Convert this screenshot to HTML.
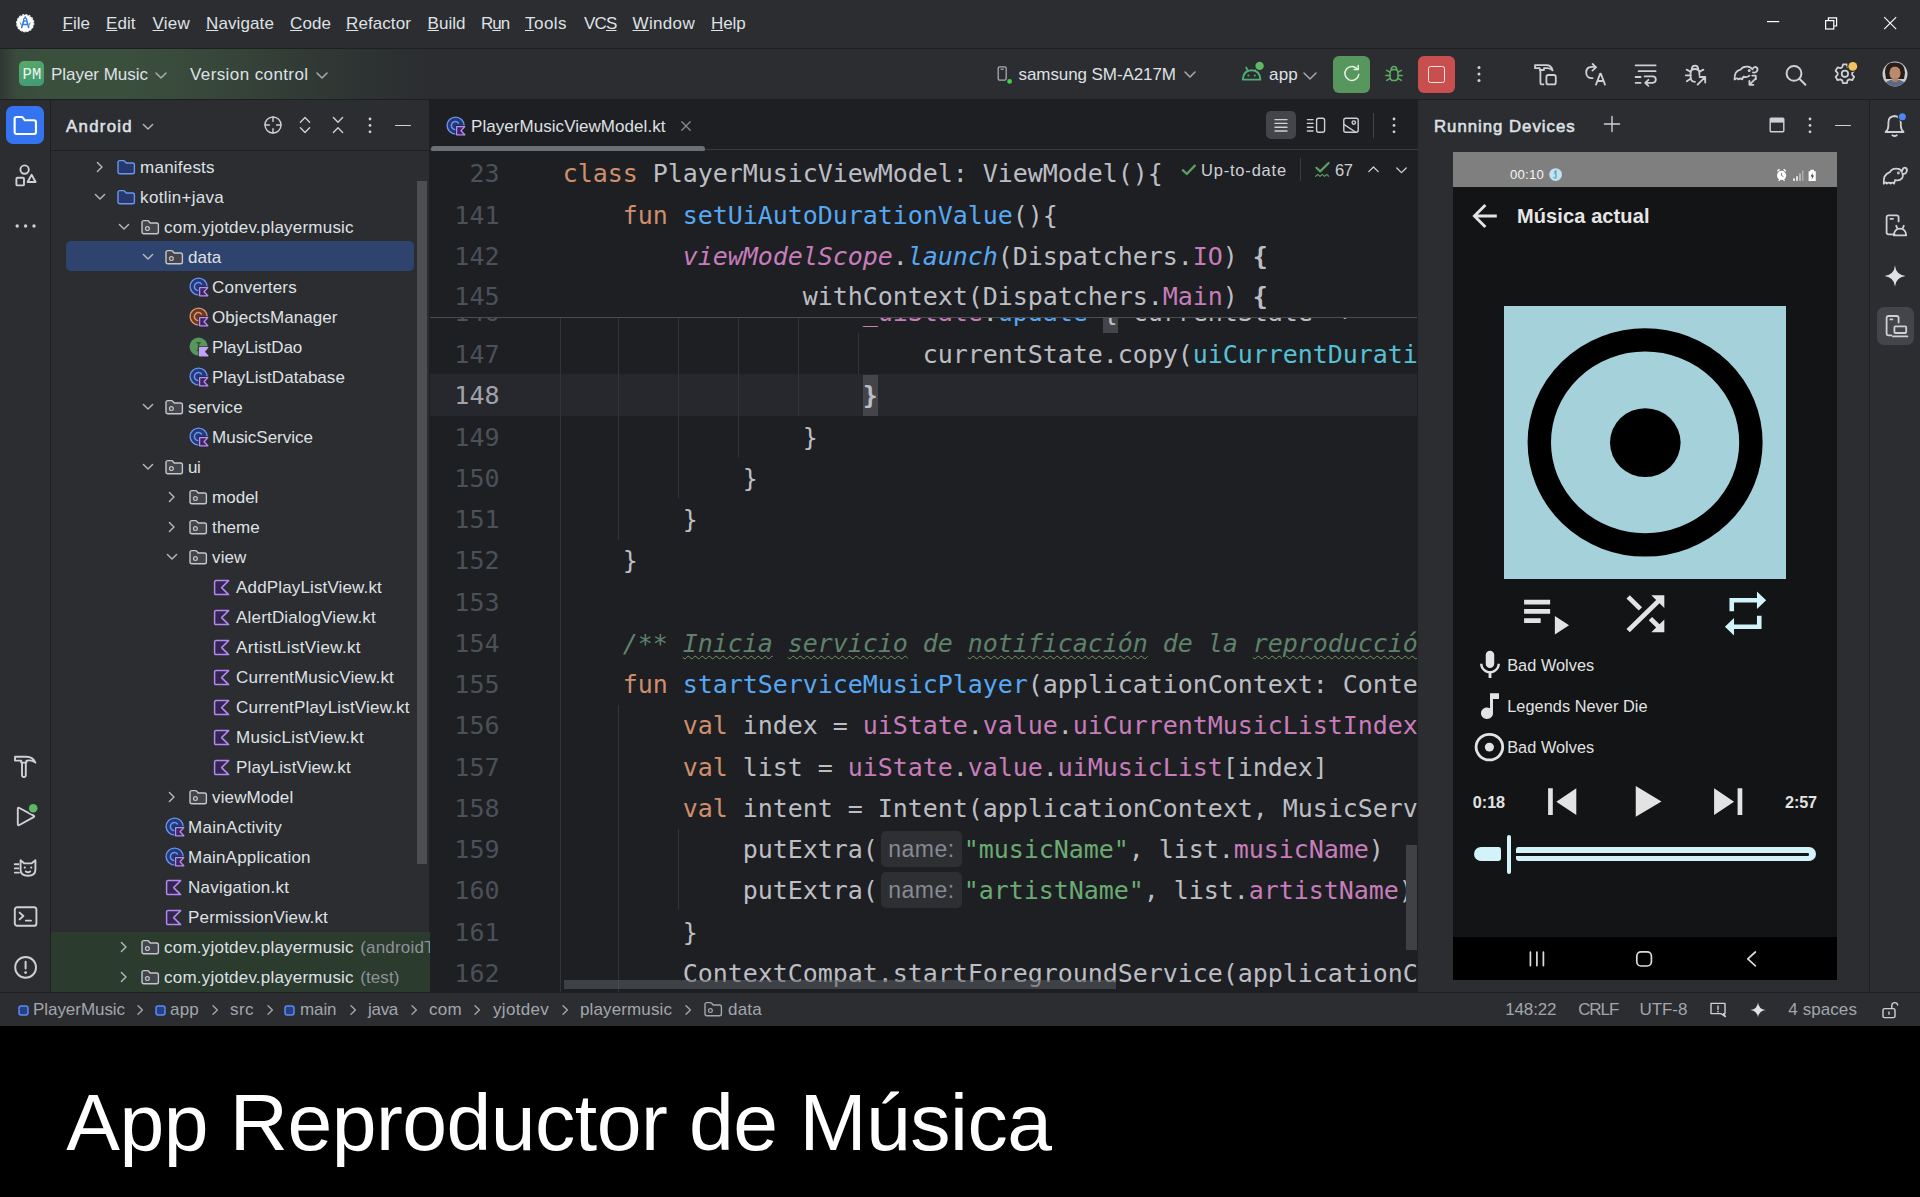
<!DOCTYPE html>
<html lang="es">
<head>
<meta charset="utf-8">
<title>App Reproductor de Música</title>
<style>
*{box-sizing:border-box;margin:0;padding:0}
html,body{width:1920px;height:1197px;overflow:hidden;background:#000}
body{position:relative;font-family:"Liberation Sans",sans-serif;font-size:16.25px;color:#dfe1e5;-webkit-font-smoothing:antialiased}
.abs{position:absolute}
.t{position:absolute;white-space:nowrap;line-height:20px;height:20px;margin-top:-9.2px}
svg{position:absolute;overflow:visible}
.ic{fill:none;stroke:#ced0d6;stroke-width:1.5;stroke-linecap:round;stroke-linejoin:round}
/* regions */
#titlebar{left:0;top:0;width:1920px;height:48px;background:#2b2d30}
#toolbar{left:0;top:48px;width:1920px;height:51px;background:#2b2d30;border-top:1px solid #1e1f22}
#tbgrad{left:0;top:49px;width:430px;height:50px;background:linear-gradient(90deg,rgba(59,79,61,.3) 0,rgba(59,79,61,.9) 4%,#3b4f3d 10%,#3b4f3d 30%,rgba(59,79,61,.82) 46%,rgba(59,79,61,.48) 66%,rgba(59,79,61,.16) 85%,rgba(59,79,61,0) 100%)}
#lstripe{left:0;top:99px;width:51px;height:893px;background:#2b2d30;border-right:1px solid #1e1f22;border-top:1px solid #1e1f22}
#proj{left:51px;top:99px;width:378px;height:893px;background:#2b2d30;border-top:1px solid #1e1f22;overflow:hidden}
#editor{left:429px;top:99px;width:989px;height:893px;background:#1e1f22;overflow:hidden}
#rdev{left:1418px;top:99px;width:451px;height:893px;background:#2b2d30;border-top:1px solid #1e1f22;overflow:hidden}
#rstripe{left:1869px;top:99px;width:51px;height:893px;background:#2b2d30;border-left:1px solid #1e1f22;border-top:1px solid #1e1f22}
#status{left:0;top:992px;width:1920px;height:34px;background:#2b2d30;border-top:1px solid #1e1f22;color:#a4a7b0}
#caption{left:0;top:1026px;width:1920px;height:171px;background:#000}
.cl{position:absolute;left:562.7px;white-space:pre;font-family:'DejaVu Sans Mono','Liberation Mono',monospace;font-size:25px;line-height:41px;height:41px;color:#bcbec4;letter-spacing:-0.05px}
.ln{position:absolute;left:440px;width:59.5px;text-align:right;white-space:pre;font-family:'DejaVu Sans Mono','Liberation Mono',monospace;font-size:25px;line-height:41px;height:41px;letter-spacing:0px}
.hint{display:inline-block;position:relative;width:86px;height:41px;vertical-align:top}
.hb{position:absolute;left:3.3px;top:1.5px;width:80.6px;height:36px;border-radius:5px;background:#2d2f33;color:#868a91;font-family:'Liberation Sans',sans-serif;font-size:23px;line-height:37.4px;padding-left:7.2px;letter-spacing:.5px;font-style:normal}
.ig{position:absolute;width:1px;background:#313438}
</style>
</head>
<body>
<div id="titlebar" class="abs"></div>
<div id="toolbar" class="abs"></div>
<div id="tbgrad" class="abs"></div>
<div id="lstripe" class="abs"></div>
<div id="proj" class="abs"></div>
<div id="editor" class="abs"></div>
<div id="rdev" class="abs"></div>
<div id="rstripe" class="abs"></div>
<div id="status" class="abs"></div>
<div id="caption" class="abs"></div>
<!-- titlebar -->
<svg style="left:15.8px;top:13.6px" width="18.4" height="18.4" viewBox="0 0 20 20">
<circle cx="10" cy="10" r="9.3" fill="#fff"/>
<circle cx="10" cy="10" r="9.3" fill="none" stroke="#e8ecf4" stroke-width="1.4" stroke-dasharray="2.2 1.45"/>
<path d="M10 3.2 L10 5.2 M8.7 6.2 L6.2 14.6 M11.3 6.2 L13.8 14.6 M7 11.4 H13" stroke="#3b78e7" stroke-width="1.7" fill="none" stroke-linecap="round"/>
<circle cx="10" cy="6.1" r="1.7" fill="#fff" stroke="#3b78e7" stroke-width="1.3"/>
<path d="M4.6 9.6 L6 12.6 M15.4 9.6 L14 12.6" stroke="#5fae7a" stroke-width="1.2" stroke-linecap="round"/>
</svg>
<div class="t" style="left:62.5px;top:23px;font-size:17px;letter-spacing:0.02px;text-underline-offset:1.2px;text-decoration-thickness:1.2px;"><u>F</u>ile</div>
<div class="t" style="left:106px;top:23px;font-size:17px;letter-spacing:0.05px;text-underline-offset:1.2px;text-decoration-thickness:1.2px;"><u>E</u>dit</div>
<div class="t" style="left:152.5px;top:23px;font-size:17px;letter-spacing:0.24px;text-underline-offset:1.2px;text-decoration-thickness:1.2px;"><u>V</u>iew</div>
<div class="t" style="left:206px;top:23px;font-size:17px;letter-spacing:0.11px;text-underline-offset:1.2px;text-decoration-thickness:1.2px;"><u>N</u>avigate</div>
<div class="t" style="left:290px;top:23px;font-size:17px;letter-spacing:0.09px;text-underline-offset:1.2px;text-decoration-thickness:1.2px;"><u>C</u>ode</div>
<div class="t" style="left:346px;top:23px;font-size:17px;letter-spacing:0.09px;text-underline-offset:1.2px;text-decoration-thickness:1.2px;"><u>R</u>efactor</div>
<div class="t" style="left:427.5px;top:23px;font-size:17px;letter-spacing:0.04px;text-underline-offset:1.2px;text-decoration-thickness:1.2px;"><u>B</u>uild</div>
<div class="t" style="left:481px;top:23px;font-size:17px;letter-spacing:-1.06px;text-underline-offset:1.2px;text-decoration-thickness:1.2px;">R<u>u</u>n</div>
<div class="t" style="left:525px;top:23px;font-size:17px;letter-spacing:0.46px;text-underline-offset:1.2px;text-decoration-thickness:1.2px;"><u>T</u>ools</div>
<div class="t" style="left:584px;top:23px;font-size:17px;letter-spacing:-0.82px;text-underline-offset:1.2px;text-decoration-thickness:1.2px;">VC<u>S</u></div>
<div class="t" style="left:632.5px;top:23px;font-size:17px;letter-spacing:0.34px;text-underline-offset:1.2px;text-decoration-thickness:1.2px;"><u>W</u>indow</div>
<div class="t" style="left:711px;top:23px;font-size:17px;letter-spacing:-0.12px;text-underline-offset:1.2px;text-decoration-thickness:1.2px;"><u>H</u>elp</div>
<svg style="left:1767px;top:13px" width="140" height="20"><g fill="none" stroke="#fff" stroke-width="1.2"><path d="M0 8.6 H12.2"/><rect x="58.6" y="7.6" width="8.2" height="8.4"/><path d="M61.4 7.6 V4.8 H69.6 V13 H66.8"/><path d="M117.2 4.2 L129.2 16.2 M129.2 4.2 L117.2 16.2" stroke-width="1.1"/></g></svg>
<div class="abs" style="left:19px;top:61px;width:25px;height:25px;border-radius:5px;background:linear-gradient(160deg,#5aa869 0%,#3f9a78 100%)"></div>
<div class="t" style="left:22.5px;top:74px;font-size:15.5px;letter-spacing:0.2px;color:#e9f5ea;font-family:'Liberation Mono',sans-serif;transform:scaleY(1.12);">PM</div>
<div class="t" style="left:51px;top:74px;font-size:17px;letter-spacing:-0.03px;">Player Music</div>
<svg style="left:156.0px;top:72.5px" width="10" height="5"><path d="M0 0 L5.0 5 L10 0" fill="none" stroke="#a4a7ae" stroke-width="1.6" stroke-linecap="round" stroke-linejoin="round"/></svg>
<div class="t" style="left:190px;top:74px;font-size:17px;letter-spacing:0.4px;">Version control</div>
<svg style="left:317.0px;top:72.5px" width="10" height="5"><path d="M0 0 L5.0 5 L10 0" fill="none" stroke="#a4a7ae" stroke-width="1.6" stroke-linecap="round" stroke-linejoin="round"/></svg>
<svg style="left:997px;top:65.4px" width="15" height="20"><rect x="1.2" y="1.8" width="8" height="13.4" rx="1.6" fill="none" stroke="#a9acb3" stroke-width="1.3"/><path d="M3.6 4.2 H6.8" stroke="#a9acb3" stroke-width="1.2"/><circle cx="12.6" cy="16.4" r="3.2" fill="#2b2d30"/><circle cx="12.6" cy="16.4" r="2.4" fill="#43cf47"/></svg>
<div class="t" style="left:1018.5px;top:74px;font-size:17px;letter-spacing:-0.08px;">samsung SM-A217M</div>
<svg style="left:1184.5px;top:72.0px" width="10" height="5"><path d="M0 0 L5.0 5 L10 0" fill="none" stroke="#a4a7ae" stroke-width="1.6" stroke-linecap="round" stroke-linejoin="round"/></svg>
<svg style="left:1241px;top:60px" width="26" height="24"><g fill="none" stroke="#4fae76" stroke-width="1.9" stroke-linecap="round" stroke-linejoin="round"><path d="M1.8 19.6 Q2.4 10.2 10.6 10.2 Q18.8 10.2 19.4 19.6 Z"/><path d="M5.2 7.6 L6.9 10.8 M16 7.6 L14.3 10.8"/></g><circle cx="7.4" cy="15.6" r="1" fill="#4fae76"/><circle cx="13.8" cy="15.6" r="1" fill="#4fae76"/><circle cx="18.6" cy="5.9" r="5.4" fill="#2b2d30"/><circle cx="18.6" cy="5.9" r="4.2" fill="#5fb865"/></svg>
<div class="t" style="left:1269px;top:74.6px;font-size:17px;letter-spacing:0.21px;">app</div>
<svg style="left:1304.0px;top:72.5px" width="12" height="6"><path d="M0 0 L6.0 6 L12 0" fill="none" stroke="#a4a7ae" stroke-width="1.5" stroke-linecap="round" stroke-linejoin="round"/></svg>
<div class="abs" style="left:1332.5px;top:55.5px;width:37.5px;height:37px;border-radius:6px;background:#57965c"></div>
<svg style="left:1342px;top:64px" width="20" height="20"><path d="M15.6 5.4 A7 7 0 1 0 16.8 10.6" fill="none" stroke="#e4f3e5" stroke-width="1.5" stroke-linecap="round"/><path d="M12.2 5.6 H16.2 V1.6" fill="none" stroke="#e4f3e5" stroke-width="1.5" stroke-linecap="round" stroke-linejoin="round"/></svg>
<svg style="left:1384px;top:64px" width="20" height="20"><g fill="none" stroke="#5fad65" stroke-width="1.5" stroke-linecap="round" stroke-linejoin="round"><path d="M6 8.6 Q6 5.6 10 5.6 Q14 5.6 14 8.6 V12.4 Q14 16.6 10 16.6 Q6 16.6 6 12.4 Z"/><path d="M7.2 5.6 Q7.4 2.6 10 2.6 Q12.6 2.6 12.8 5.6"/><path d="M6 8.2 L2.6 6.4 M14 8.2 L17.4 6.4 M6 11.4 H1.8 M14 11.4 H18.2 M6.3 14.2 L2.8 16.4 M13.7 14.2 L17.2 16.4"/></g></svg>
<div class="abs" style="left:1417.5px;top:55.5px;width:37.5px;height:37px;border-radius:6px;background:#c94f4f"></div>
<div class="abs" style="left:1427.5px;top:65.5px;width:17.5px;height:17.5px;border-radius:2.5px;border:1.7px solid #fbe4e4"></div>
<svg style="left:1476px;top:64px" width="6" height="20"><circle cx="3" cy="3.4" r="1.5" fill="#ced0d6"/><circle cx="3" cy="10" r="1.5" fill="#ced0d6"/><circle cx="3" cy="16.6" r="1.5" fill="#ced0d6"/></svg>
<svg style="left:1533px;top:62px" width="26" height="26"><g fill="none" stroke="#ced0d6" stroke-width="1.8" stroke-linecap="round" stroke-linejoin="round"><path d="M2 3.2 H13.4 Q18.4 3.2 19.6 8.4 Q17 5.8 13.6 6.2 H11 V8 H6.8 V6.2 H2 Z"/><path d="M7.4 8.2 V21 Q7.4 22.4 8.9 22.4 H10.4"/><rect x="13.4" y="13" width="9.4" height="9.4" rx="2"/></g></svg>
<svg style="left:1583px;top:62px" width="26" height="26"><g fill="none" stroke="#ced0d6" stroke-width="1.8" stroke-linecap="round" stroke-linejoin="round"><path d="M12.6 5.2 Q3.2 3.4 3.2 10.4 Q3.2 16.4 9.6 16.2"/><path d="M9.6 2 L13 5.4 L9.4 8.6"/><path d="M13 22.6 L17.2 11.6 H17.8 L22 22.6 M14.6 19 H20.4"/></g></svg>
<svg style="left:1633px;top:62px" width="26" height="26"><g fill="none" stroke="#ced0d6" stroke-width="1.8" stroke-linecap="round" stroke-linejoin="round"><path d="M2.6 3.4 H22.6 M5.6 9.2 H22.6"/><path d="M2.6 15 H7.6 M2.6 20.8 H7.6"/><path d="M11.6 14.4 H19.6 Q22.8 14.4 22.8 17.6 Q22.8 20.8 19.6 20.8 H12.6 M15.4 17.8 L12.2 20.8 L15.4 23.8"/></g></svg>
<svg style="left:1683px;top:62px" width="26" height="26"><g fill="none" stroke="#ced0d6" stroke-width="1.8" stroke-linecap="round" stroke-linejoin="round"><path d="M16.4 13 V10.6 Q16.4 7 12 7 Q7.6 7 7.6 10.6 V15 Q7.6 19.8 12 19.8"/><path d="M8.8 7 Q9 3.6 12 3.6 Q15 3.6 15.2 7"/><path d="M7.6 9.8 L3.6 7.6 M16.4 9.8 L20.4 7.6 M7.6 13.4 H2.8 M7.8 16.6 L3.8 19.2"/><path d="M14.6 22.6 L22 15.2 M16.6 15 H22.2 V20.6"/></g></svg>
<svg style="left:1732px;top:62px" width="28" height="26"><g fill="none" stroke="#ced0d6" stroke-width="1.8" stroke-linecap="round" stroke-linejoin="round"><path d="M2.6 17.4 Q2 9 8.6 7.6 Q10.6 4.2 15.6 4.6 Q19 4.8 20.4 7.4 Q22 4 24.6 5.4 Q26.4 7 24.8 9.4 Q23.4 11 21 10.4"/><path d="M2.8 17.4 Q4.6 15.4 6.6 17.4 Q8.4 15.6 10.2 17.4 L11.4 14.6 Q14.8 16 17.4 13.6"/><path d="M17.6 22.6 L23.6 16.6 M17.4 18.8 V22.8 H21.4"/><path d="M20.2 13.6 H23.8 V17.2" /><circle cx="17.2" cy="8.6" r=".6" fill="#ced0d6"/></g></svg>
<svg style="left:1783px;top:62px" width="26" height="26"><g fill="none" stroke="#ced0d6" stroke-width="2" stroke-linecap="round" stroke-linejoin="round"><circle cx="11" cy="11.4" r="7.4"/><path d="M16.6 17 L22.4 22.8"/></g></svg>
<svg style="left:1832px;top:61px" width="28" height="28"><g fill="none" stroke="#ced0d6" stroke-width="1.8" stroke-linecap="round" stroke-linejoin="round"><path d="M11 3.4 H14.8 L15.6 6.2 L17.4 7.2 L20.2 6.4 L22.2 9.8 L20.2 11.8 V13.8 L22.2 15.8 L20.2 19.2 L17.4 18.4 L15.6 19.4 L14.8 22.2 H11 L10.2 19.4 L8.4 18.4 L5.6 19.2 L3.6 15.8 L5.6 13.8 V11.8 L3.6 9.8 L5.6 6.4 L8.4 7.2 L10.2 6.2 Z"/><circle cx="12.9" cy="12.8" r="3.2"/></g><circle cx="20.8" cy="5.4" r="5.6" fill="#2b2d30"/><circle cx="20.8" cy="5.4" r="4.4" fill="#f2c55c"/></svg>
<svg style="left:1882px;top:61px" width="26" height="26"><defs><clipPath id="avc"><circle cx="13" cy="13" r="12.5"/></clipPath></defs><g clip-path="url(#avc)"><rect width="26" height="26" fill="#c9cdd2"/><path d="M3 11 Q3 1 13 1.5 Q23 1 23 12 L22 18 H4 Z" fill="#2a1d18"/><ellipse cx="13" cy="12" rx="5.6" ry="6.8" fill="#b98a70"/><path d="M7 8 Q13 3 19 8 Q17 5 13 5 Q9 5 7 8Z" fill="#2a1d18"/><path d="M1 27 Q2 18.5 13 18.5 Q24 18.5 25 27 Z" fill="#5b6a86"/><path d="M10 17 H16 V20 Q13 22 10 20 Z" fill="#b08067"/></g></svg>
<!-- lstripe -->
<div class="abs" style="left:6px;top:106px;width:38px;height:38px;border-radius:7px;background:#3574f0"></div>
<svg style="left:13px;top:114.2px" width="24.6" height="22.8" viewBox="0 0 24 22"><path d="M1.6 4.6 Q1.6 2.8 3.4 2.8 H8.2 Q9.2 2.8 9.8 3.6 L11.6 6 H20.4 Q22.4 6 22.4 8 V17.4 Q22.4 19.4 20.4 19.4 H3.6 Q1.6 19.4 1.6 17.4 Z" fill="none" stroke="#fff" stroke-width="2.1" stroke-linejoin="round"/></svg>
<svg style="left:13px;top:163px" width="26" height="26"><g fill="none" stroke="#ced0d6" stroke-width="1.9" stroke-linecap="round" stroke-linejoin="round"><circle cx="11.6" cy="6.6" r="4.2"/><rect x="3.4" y="14.8" width="7.6" height="7.6" rx="1"/><path d="M18.6 11.8 L22.6 19 H14.6 Z"/></g></svg>
<svg style="left:14px;top:222px" width="24" height="8"><circle cx="3.2" cy="4" r="1.7" fill="#ced0d6"/><circle cx="11.6" cy="4" r="1.7" fill="#ced0d6"/><circle cx="20" cy="4" r="1.7" fill="#ced0d6"/></svg>
<svg style="left:13px;top:754px" width="26" height="26"><g fill="none" stroke="#ced0d6" stroke-width="1.9" stroke-linecap="round" stroke-linejoin="round"><path d="M2 2.8 H13.6 Q19.6 2.8 22.4 8.6 Q18.6 5.8 14.6 6.6 H13.4 V8.6 H8.2 V6.6 H2 Z"/><path d="M9 8.8 V21.6 Q9 23 10.6 23 H11.2 Q12.8 23 12.8 21.6 V8.8"/></g></svg>
<svg style="left:13px;top:802px" width="28" height="28"><g fill="none" stroke="#ced0d6" stroke-width="1.9" stroke-linecap="round" stroke-linejoin="round"><path d="M4.8 7 Q4.8 5.2 6.4 6 L20.6 13.6 Q21.8 14.4 20.6 15.2 L6.4 23 Q4.8 23.8 4.8 22 Z"/></g><circle cx="20.2" cy="6.2" r="5.6" fill="#2b2d30"/><circle cx="20.2" cy="6.2" r="4.3" fill="#5fb865"/></svg>
<svg style="left:12px;top:855px" width="28" height="26"><g fill="none" stroke="#ced0d6" stroke-width="1.9" stroke-linecap="round" stroke-linejoin="round"><path d="M8.6 5.2 L12.4 8.4 H19.4 L23.4 5.2 V14.8 Q23.4 20.8 16 20.8 Q8.6 20.8 8.6 14.8 Z"/><path d="M2.8 9.2 H6.4 M2.8 13.4 H6.4 M2.8 17.6 H7"/><path d="M13.8 16.4 Q16 18 18.2 16.4"/></g><circle cx="12.8" cy="12.6" r="1.1" fill="#ced0d6"/><circle cx="19.2" cy="12.6" r="1.1" fill="#ced0d6"/></svg>
<svg style="left:13px;top:905px" width="26" height="24"><g fill="none" stroke="#ced0d6" stroke-width="1.9" stroke-linecap="round" stroke-linejoin="round"><rect x="1.8" y="2.2" width="21.6" height="18.6" rx="2.4"/><path d="M6.6 7.6 L10.4 11 L6.6 14.4 M12.8 15.6 H18"/></g></svg>
<svg style="left:13px;top:955px" width="26" height="26"><g fill="none" stroke="#ced0d6" stroke-width="1.9" stroke-linecap="round" stroke-linejoin="round"><circle cx="12.6" cy="12.4" r="10.4"/><path d="M12.6 6.8 V13.6" stroke-width="2"/></g><circle cx="12.6" cy="17.6" r="1.4" fill="#ced0d6"/></svg>
<!-- proj -->
<div class="t" style="left:66px;top:126.3px;font-size:16.8px;letter-spacing:1.31px;-webkit-text-stroke:0.55px #dfe1e5;">Android</div>
<svg style="left:143px;top:123.5px" width="10" height="6"><path d="M0.4 0.4 L5 5 L9.6 0.4" fill="none" stroke="#b4b8bf" stroke-width="1.4" stroke-linecap="round" stroke-linejoin="round"/></svg>
<svg style="left:263px;top:115px" width="20" height="20"><g fill="none" stroke="#ced0d6" stroke-width="1.4" stroke-linecap="round" stroke-linejoin="round"><circle cx="10" cy="10" r="8"/><path d="M10 2 V6.4 M10 13.6 V18 M2 10 H6.4 M13.6 10 H18"/></g></svg>
<svg style="left:298px;top:115px" width="14" height="20"><g fill="none" stroke="#ced0d6" stroke-width="1.4" stroke-linecap="round" stroke-linejoin="round"><path d="M2.4 7.2 L7 2.6 L11.6 7.2 M2.4 12.8 L7 17.4 L11.6 12.8"/></g></svg>
<svg style="left:331px;top:115px" width="14" height="20"><g fill="none" stroke="#ced0d6" stroke-width="1.4" stroke-linecap="round" stroke-linejoin="round"><path d="M2.4 2.6 L7 7.2 L11.6 2.6 M2.4 17.4 L7 12.8 L11.6 17.4"/></g></svg>
<svg style="left:367px;top:116px" width="6" height="20"><circle cx="3" cy="3" r="1.4" fill="#ced0d6"/><circle cx="3" cy="9.4" r="1.4" fill="#ced0d6"/><circle cx="3" cy="15.8" r="1.4" fill="#ced0d6"/></svg>
<div class="abs" style="left:395px;top:124.5px;width:16px;height:1.6px;background:#ced0d6;border-radius:1px"></div>
<div class="abs" style="left:51px;top:150px;width:379px;height:1px;background:#1e1f22"></div>
<div class="abs" style="left:51px;top:932px;width:379px;height:60px;background:#2b3b2e"></div>
<div class="abs" style="left:66px;top:240.8px;width:348px;height:30.4px;border-radius:5px;background:#2e436e"></div>
<div class="abs" style="left:416.5px;top:181px;width:10px;height:683px;background:#4d4e51"></div>
<svg style="left:97.10000000000001px;top:162px" width="6" height="10"><path d="M0.4 0.4 L5 5 L0.4 9.6" fill="none" stroke="#b4b8bf" stroke-width="1.4" stroke-linecap="round" stroke-linejoin="round"/></svg>
<svg style="left:117.1px;top:158.8px" width="19" height="17"><path d="M1 3.6 Q1 1.6 3 1.6 H6.4 Q7.2 1.6 7.7 2.2 L9.2 4 H15.6 Q17.4 4 17.4 5.8 V13 Q17.4 14.8 15.6 14.8 H2.8 Q1 14.8 1 13 Z" fill="#25396f" stroke="#6c95ee" stroke-width="1.4" stroke-linejoin="round"/></svg>
<div class="t" style="left:140.1px;top:167.0px;font-size:17px;letter-spacing:0.21px;">manifests</div>
<svg style="left:95.0px;top:194.2px" width="10" height="6"><path d="M0.4 0.4 L5 5 L9.6 0.4" fill="none" stroke="#b4b8bf" stroke-width="1.4" stroke-linecap="round" stroke-linejoin="round"/></svg>
<svg style="left:117.1px;top:188.8px" width="19" height="17"><path d="M1 3.6 Q1 1.6 3 1.6 H6.4 Q7.2 1.6 7.7 2.2 L9.2 4 H15.6 Q17.4 4 17.4 5.8 V13 Q17.4 14.8 15.6 14.8 H2.8 Q1 14.8 1 13 Z" fill="#25396f" stroke="#6c95ee" stroke-width="1.4" stroke-linejoin="round"/></svg>
<div class="t" style="left:140.1px;top:197.0px;font-size:17px;letter-spacing:0.29px;">kotlin+java</div>
<svg style="left:119.0px;top:224.2px" width="10" height="6"><path d="M0.4 0.4 L5 5 L9.6 0.4" fill="none" stroke="#b4b8bf" stroke-width="1.4" stroke-linecap="round" stroke-linejoin="round"/></svg>
<svg style="left:141.1px;top:218.8px" width="19" height="17"><path d="M1 3.6 Q1 1.6 3 1.6 H6.4 Q7.2 1.6 7.7 2.2 L9.2 4 H15.6 Q17.4 4 17.4 5.8 V13 Q17.4 14.8 15.6 14.8 H2.8 Q1 14.8 1 13 Z" fill="#43454a" stroke="#c3c6cc" stroke-width="1.4" stroke-linejoin="round"/><circle cx="6.4" cy="9.6" r="1.9" fill="none" stroke="#c3c6cc" stroke-width="1.2"/></svg>
<div class="t" style="left:164.1px;top:227.0px;font-size:17px;letter-spacing:0.21px;">com.yjotdev.playermusic</div>
<svg style="left:143.0px;top:254.2px" width="10" height="6"><path d="M0.4 0.4 L5 5 L9.6 0.4" fill="none" stroke="#b4b8bf" stroke-width="1.4" stroke-linecap="round" stroke-linejoin="round"/></svg>
<svg style="left:165.1px;top:248.8px" width="19" height="17"><path d="M1 3.6 Q1 1.6 3 1.6 H6.4 Q7.2 1.6 7.7 2.2 L9.2 4 H15.6 Q17.4 4 17.4 5.8 V13 Q17.4 14.8 15.6 14.8 H2.8 Q1 14.8 1 13 Z" fill="#43454a" stroke="#c3c6cc" stroke-width="1.4" stroke-linejoin="round"/><circle cx="6.4" cy="9.6" r="1.9" fill="none" stroke="#c3c6cc" stroke-width="1.2"/></svg>
<div class="t" style="left:188.1px;top:257.0px;font-size:17px;letter-spacing:-0.02px;">data</div>
<svg style="left:188.5px;top:277.4px" width="21" height="21"><circle cx="9.6" cy="9.6" r="8.5" fill="#223a7c" stroke="#6d92ea" stroke-width="1.4"/><path d="M12.4 7 A4 4 0 1 0 12.4 12.2" fill="none" stroke="#6d92ea" stroke-width="1.5" stroke-linecap="round"/><path d="M9.4 9.4 H20.4 V20.4 H9.4 Z" fill="#2b2d30"/><path d="M10.6 10.6 H18.8 L15 14.7 L18.8 18.8 H10.6 Z" fill="#3b2466" stroke="#b98cf0" stroke-width="1.3" stroke-linejoin="round"/></svg>
<div class="t" style="left:212.1px;top:287.0px;font-size:17px;letter-spacing:0.16px;">Converters</div>
<svg style="left:188.5px;top:307.4px" width="21" height="21"><circle cx="9.6" cy="9.6" r="8.5" fill="#6b3a21" stroke="#d9966f" stroke-width="1.4"/><path d="M12.4 7 A4 4 0 1 0 12.4 12.2" fill="none" stroke="#d9966f" stroke-width="1.5" stroke-linecap="round"/><path d="M9.4 9.4 H20.4 V20.4 H9.4 Z" fill="#2b2d30"/><path d="M10.6 10.6 H18.8 L15 14.7 L18.8 18.8 H10.6 Z" fill="#3b2466" stroke="#b98cf0" stroke-width="1.3" stroke-linejoin="round"/></svg>
<div class="t" style="left:212.1px;top:317.0px;font-size:17px;letter-spacing:0.04px;">ObjectsManager</div>
<svg style="left:188.5px;top:337.4px" width="21" height="21"><circle cx="9.6" cy="9.6" r="9.1" fill="#57965c"/><path d="M7.6 5.8 H11.6 M9.6 5.8 V13.6 M7.6 13.6 H11.6" stroke="#2f5a33" stroke-width="1.5" fill="none"/><path d="M9.4 9.4 H20.4 V20.4 H9.4 Z" fill="#2b2d30"/><path d="M10.6 10.6 H18.8 L15 14.7 L18.8 18.8 H10.6 Z" fill="#c4a2f7" stroke="#c4a2f7" stroke-width="1.3" stroke-linejoin="round"/></svg>
<div class="t" style="left:212.1px;top:347.0px;font-size:17px;letter-spacing:-0.05px;">PlayListDao</div>
<svg style="left:188.5px;top:367.4px" width="21" height="21"><circle cx="9.6" cy="9.6" r="8.5" fill="#223a7c" stroke="#6d92ea" stroke-width="1.4"/><path d="M12.4 7 A4 4 0 1 0 12.4 12.2" fill="none" stroke="#6d92ea" stroke-width="1.5" stroke-linecap="round"/><path d="M9.4 9.4 H20.4 V20.4 H9.4 Z" fill="#2b2d30"/><path d="M10.6 10.6 H18.8 L15 14.7 L18.8 18.8 H10.6 Z" fill="#3b2466" stroke="#b98cf0" stroke-width="1.3" stroke-linejoin="round"/></svg>
<div class="t" style="left:212.1px;top:377.0px;font-size:17px;letter-spacing:0.03px;">PlayListDatabase</div>
<svg style="left:143.0px;top:404.2px" width="10" height="6"><path d="M0.4 0.4 L5 5 L9.6 0.4" fill="none" stroke="#b4b8bf" stroke-width="1.4" stroke-linecap="round" stroke-linejoin="round"/></svg>
<svg style="left:165.1px;top:398.8px" width="19" height="17"><path d="M1 3.6 Q1 1.6 3 1.6 H6.4 Q7.2 1.6 7.7 2.2 L9.2 4 H15.6 Q17.4 4 17.4 5.8 V13 Q17.4 14.8 15.6 14.8 H2.8 Q1 14.8 1 13 Z" fill="#43454a" stroke="#c3c6cc" stroke-width="1.4" stroke-linejoin="round"/><circle cx="6.4" cy="9.6" r="1.9" fill="none" stroke="#c3c6cc" stroke-width="1.2"/></svg>
<div class="t" style="left:188.1px;top:407.0px;font-size:17px;letter-spacing:0.11px;">service</div>
<svg style="left:188.5px;top:427.4px" width="21" height="21"><circle cx="9.6" cy="9.6" r="8.5" fill="#223a7c" stroke="#6d92ea" stroke-width="1.4"/><path d="M12.4 7 A4 4 0 1 0 12.4 12.2" fill="none" stroke="#6d92ea" stroke-width="1.5" stroke-linecap="round"/><path d="M9.4 9.4 H20.4 V20.4 H9.4 Z" fill="#2b2d30"/><path d="M10.6 10.6 H18.8 L15 14.7 L18.8 18.8 H10.6 Z" fill="#3b2466" stroke="#b98cf0" stroke-width="1.3" stroke-linejoin="round"/></svg>
<div class="t" style="left:212.1px;top:437.0px;font-size:17px;letter-spacing:-0.03px;">MusicService</div>
<svg style="left:143.0px;top:464.2px" width="10" height="6"><path d="M0.4 0.4 L5 5 L9.6 0.4" fill="none" stroke="#b4b8bf" stroke-width="1.4" stroke-linecap="round" stroke-linejoin="round"/></svg>
<svg style="left:165.1px;top:458.8px" width="19" height="17"><path d="M1 3.6 Q1 1.6 3 1.6 H6.4 Q7.2 1.6 7.7 2.2 L9.2 4 H15.6 Q17.4 4 17.4 5.8 V13 Q17.4 14.8 15.6 14.8 H2.8 Q1 14.8 1 13 Z" fill="#43454a" stroke="#c3c6cc" stroke-width="1.4" stroke-linejoin="round"/><circle cx="6.4" cy="9.6" r="1.9" fill="none" stroke="#c3c6cc" stroke-width="1.2"/></svg>
<div class="t" style="left:188.1px;top:467.0px;font-size:17px;letter-spacing:-0.62px;">ui</div>
<svg style="left:169.1px;top:492px" width="6" height="10"><path d="M0.4 0.4 L5 5 L0.4 9.6" fill="none" stroke="#b4b8bf" stroke-width="1.4" stroke-linecap="round" stroke-linejoin="round"/></svg>
<svg style="left:189.1px;top:488.8px" width="19" height="17"><path d="M1 3.6 Q1 1.6 3 1.6 H6.4 Q7.2 1.6 7.7 2.2 L9.2 4 H15.6 Q17.4 4 17.4 5.8 V13 Q17.4 14.8 15.6 14.8 H2.8 Q1 14.8 1 13 Z" fill="#43454a" stroke="#c3c6cc" stroke-width="1.4" stroke-linejoin="round"/><circle cx="6.4" cy="9.6" r="1.9" fill="none" stroke="#c3c6cc" stroke-width="1.2"/></svg>
<div class="t" style="left:212.1px;top:497.0px;font-size:17px;letter-spacing:-0.0px;">model</div>
<svg style="left:169.1px;top:522px" width="6" height="10"><path d="M0.4 0.4 L5 5 L0.4 9.6" fill="none" stroke="#b4b8bf" stroke-width="1.4" stroke-linecap="round" stroke-linejoin="round"/></svg>
<svg style="left:189.1px;top:518.8px" width="19" height="17"><path d="M1 3.6 Q1 1.6 3 1.6 H6.4 Q7.2 1.6 7.7 2.2 L9.2 4 H15.6 Q17.4 4 17.4 5.8 V13 Q17.4 14.8 15.6 14.8 H2.8 Q1 14.8 1 13 Z" fill="#43454a" stroke="#c3c6cc" stroke-width="1.4" stroke-linejoin="round"/><circle cx="6.4" cy="9.6" r="1.9" fill="none" stroke="#c3c6cc" stroke-width="1.2"/></svg>
<div class="t" style="left:212.1px;top:527.0px;font-size:17px;letter-spacing:0.07px;">theme</div>
<svg style="left:167.0px;top:554.2px" width="10" height="6"><path d="M0.4 0.4 L5 5 L9.6 0.4" fill="none" stroke="#b4b8bf" stroke-width="1.4" stroke-linecap="round" stroke-linejoin="round"/></svg>
<svg style="left:189.1px;top:548.8px" width="19" height="17"><path d="M1 3.6 Q1 1.6 3 1.6 H6.4 Q7.2 1.6 7.7 2.2 L9.2 4 H15.6 Q17.4 4 17.4 5.8 V13 Q17.4 14.8 15.6 14.8 H2.8 Q1 14.8 1 13 Z" fill="#43454a" stroke="#c3c6cc" stroke-width="1.4" stroke-linejoin="round"/><circle cx="6.4" cy="9.6" r="1.9" fill="none" stroke="#c3c6cc" stroke-width="1.2"/></svg>
<div class="t" style="left:212.1px;top:557.0px;font-size:17px;letter-spacing:0.07px;">view</div>
<svg style="left:212.7px;top:578.6px" width="18" height="18"><path d="M3 1.6 H15.6 L8.6 8.6 L15.6 15.6 H3 Q1.6 15.6 1.6 14.2 V3 Q1.6 1.6 3 1.6 Z" fill="#33254f" stroke="#b38af0" stroke-width="1.5" stroke-linejoin="round"/></svg>
<div class="t" style="left:236.1px;top:587.0px;font-size:17px;letter-spacing:0.14px;">AddPlayListView.kt</div>
<svg style="left:212.7px;top:608.6px" width="18" height="18"><path d="M3 1.6 H15.6 L8.6 8.6 L15.6 15.6 H3 Q1.6 15.6 1.6 14.2 V3 Q1.6 1.6 3 1.6 Z" fill="#33254f" stroke="#b38af0" stroke-width="1.5" stroke-linejoin="round"/></svg>
<div class="t" style="left:236.1px;top:617.0px;font-size:17px;letter-spacing:0.17px;">AlertDialogView.kt</div>
<svg style="left:212.7px;top:638.6px" width="18" height="18"><path d="M3 1.6 H15.6 L8.6 8.6 L15.6 15.6 H3 Q1.6 15.6 1.6 14.2 V3 Q1.6 1.6 3 1.6 Z" fill="#33254f" stroke="#b38af0" stroke-width="1.5" stroke-linejoin="round"/></svg>
<div class="t" style="left:236.1px;top:647.0px;font-size:17px;letter-spacing:0.36px;">ArtistListView.kt</div>
<svg style="left:212.7px;top:668.6px" width="18" height="18"><path d="M3 1.6 H15.6 L8.6 8.6 L15.6 15.6 H3 Q1.6 15.6 1.6 14.2 V3 Q1.6 1.6 3 1.6 Z" fill="#33254f" stroke="#b38af0" stroke-width="1.5" stroke-linejoin="round"/></svg>
<div class="t" style="left:236.1px;top:677.0px;font-size:17px;letter-spacing:0.17px;">CurrentMusicView.kt</div>
<svg style="left:212.7px;top:698.6px" width="18" height="18"><path d="M3 1.6 H15.6 L8.6 8.6 L15.6 15.6 H3 Q1.6 15.6 1.6 14.2 V3 Q1.6 1.6 3 1.6 Z" fill="#33254f" stroke="#b38af0" stroke-width="1.5" stroke-linejoin="round"/></svg>
<div class="t" style="left:236.1px;top:707.0px;font-size:17px;letter-spacing:0.17px;">CurrentPlayListView.kt</div>
<svg style="left:212.7px;top:728.6px" width="18" height="18"><path d="M3 1.6 H15.6 L8.6 8.6 L15.6 15.6 H3 Q1.6 15.6 1.6 14.2 V3 Q1.6 1.6 3 1.6 Z" fill="#33254f" stroke="#b38af0" stroke-width="1.5" stroke-linejoin="round"/></svg>
<div class="t" style="left:236.1px;top:737.0px;font-size:17px;letter-spacing:0.21px;">MusicListView.kt</div>
<svg style="left:212.7px;top:758.6px" width="18" height="18"><path d="M3 1.6 H15.6 L8.6 8.6 L15.6 15.6 H3 Q1.6 15.6 1.6 14.2 V3 Q1.6 1.6 3 1.6 Z" fill="#33254f" stroke="#b38af0" stroke-width="1.5" stroke-linejoin="round"/></svg>
<div class="t" style="left:236.1px;top:767.0px;font-size:17px;letter-spacing:0.11px;">PlayListView.kt</div>
<svg style="left:169.1px;top:792px" width="6" height="10"><path d="M0.4 0.4 L5 5 L0.4 9.6" fill="none" stroke="#b4b8bf" stroke-width="1.4" stroke-linecap="round" stroke-linejoin="round"/></svg>
<svg style="left:189.1px;top:788.8px" width="19" height="17"><path d="M1 3.6 Q1 1.6 3 1.6 H6.4 Q7.2 1.6 7.7 2.2 L9.2 4 H15.6 Q17.4 4 17.4 5.8 V13 Q17.4 14.8 15.6 14.8 H2.8 Q1 14.8 1 13 Z" fill="#43454a" stroke="#c3c6cc" stroke-width="1.4" stroke-linejoin="round"/><circle cx="6.4" cy="9.6" r="1.9" fill="none" stroke="#c3c6cc" stroke-width="1.2"/></svg>
<div class="t" style="left:212.1px;top:797.0px;font-size:17px;letter-spacing:0.1px;">viewModel</div>
<svg style="left:164.5px;top:817.4px" width="21" height="21"><circle cx="9.6" cy="9.6" r="8.5" fill="#223a7c" stroke="#6d92ea" stroke-width="1.4"/><path d="M12.4 7 A4 4 0 1 0 12.4 12.2" fill="none" stroke="#6d92ea" stroke-width="1.5" stroke-linecap="round"/><path d="M9.4 9.4 H20.4 V20.4 H9.4 Z" fill="#2b2d30"/><path d="M10.6 10.6 H18.8 L15 14.7 L18.8 18.8 H10.6 Z" fill="#3b2466" stroke="#b98cf0" stroke-width="1.3" stroke-linejoin="round"/></svg>
<div class="t" style="left:188.1px;top:827.0px;font-size:17px;letter-spacing:0.28px;">MainActivity</div>
<svg style="left:164.5px;top:847.4px" width="21" height="21"><circle cx="9.6" cy="9.6" r="8.5" fill="#223a7c" stroke="#6d92ea" stroke-width="1.4"/><path d="M12.4 7 A4 4 0 1 0 12.4 12.2" fill="none" stroke="#6d92ea" stroke-width="1.5" stroke-linecap="round"/><path d="M9.4 9.4 H20.4 V20.4 H9.4 Z" fill="#2b2d30"/><path d="M10.6 10.6 H18.8 L15 14.7 L18.8 18.8 H10.6 Z" fill="#3b2466" stroke="#b98cf0" stroke-width="1.3" stroke-linejoin="round"/></svg>
<div class="t" style="left:188.1px;top:857.0px;font-size:17px;letter-spacing:0.17px;">MainApplication</div>
<svg style="left:164.7px;top:878.6px" width="18" height="18"><path d="M3 1.6 H15.6 L8.6 8.6 L15.6 15.6 H3 Q1.6 15.6 1.6 14.2 V3 Q1.6 1.6 3 1.6 Z" fill="#33254f" stroke="#b38af0" stroke-width="1.5" stroke-linejoin="round"/></svg>
<div class="t" style="left:188.1px;top:887.0px;font-size:17px;letter-spacing:0.21px;">Navigation.kt</div>
<svg style="left:164.7px;top:908.6px" width="18" height="18"><path d="M3 1.6 H15.6 L8.6 8.6 L15.6 15.6 H3 Q1.6 15.6 1.6 14.2 V3 Q1.6 1.6 3 1.6 Z" fill="#33254f" stroke="#b38af0" stroke-width="1.5" stroke-linejoin="round"/></svg>
<div class="t" style="left:188.1px;top:917.0px;font-size:17px;letter-spacing:0.13px;">PermissionView.kt</div>
<svg style="left:121.10000000000001px;top:942px" width="6" height="10"><path d="M0.4 0.4 L5 5 L0.4 9.6" fill="none" stroke="#b4b8bf" stroke-width="1.4" stroke-linecap="round" stroke-linejoin="round"/></svg>
<svg style="left:141.1px;top:938.8px" width="19" height="17"><path d="M1 3.6 Q1 1.6 3 1.6 H6.4 Q7.2 1.6 7.7 2.2 L9.2 4 H15.6 Q17.4 4 17.4 5.8 V13 Q17.4 14.8 15.6 14.8 H2.8 Q1 14.8 1 13 Z" fill="#43454a" stroke="#c3c6cc" stroke-width="1.4" stroke-linejoin="round"/><circle cx="6.4" cy="9.6" r="1.9" fill="none" stroke="#c3c6cc" stroke-width="1.2"/></svg>
<div class="t" style="left:164.1px;top:947.0px;font-size:17px;letter-spacing:0.21px;">com.yjotdev.playermusic</div>
<svg style="left:121.10000000000001px;top:972px" width="6" height="10"><path d="M0.4 0.4 L5 5 L0.4 9.6" fill="none" stroke="#b4b8bf" stroke-width="1.4" stroke-linecap="round" stroke-linejoin="round"/></svg>
<svg style="left:141.1px;top:968.8px" width="19" height="17"><path d="M1 3.6 Q1 1.6 3 1.6 H6.4 Q7.2 1.6 7.7 2.2 L9.2 4 H15.6 Q17.4 4 17.4 5.8 V13 Q17.4 14.8 15.6 14.8 H2.8 Q1 14.8 1 13 Z" fill="#43454a" stroke="#c3c6cc" stroke-width="1.4" stroke-linejoin="round"/><circle cx="6.4" cy="9.6" r="1.9" fill="none" stroke="#c3c6cc" stroke-width="1.2"/></svg>
<div class="t" style="left:164.1px;top:977.0px;font-size:17px;letter-spacing:0.21px;">com.yjotdev.playermusic</div>
<div class="t" style="left:360.2px;top:947.3px;font-size:17px;letter-spacing:0.2px;color:#8e9299;">(androidTest)</div>
<div class="t" style="left:360.2px;top:977.3px;font-size:17px;letter-spacing:0.09px;color:#8e9299;">(test)</div>
<div class="abs" style="left:430px;top:932px;width:60px;height:60px;background:#1e1f22"></div>
<!-- editor -->
<div class="abs" style="left:430px;top:149px;width:988px;height:1px;background:#393b40"></div>
<div class="abs" style="left:430.5px;top:146px;width:274px;height:5.5px;border-radius:3px;background:#6c6f74"></div>
<svg style="left:445.5px;top:116px" width="21" height="21"><circle cx="9.6" cy="9.6" r="8.5" fill="#223a7c" stroke="#6d92ea" stroke-width="1.4"/><path d="M12.4 7 A4 4 0 1 0 12.4 12.2" fill="none" stroke="#6d92ea" stroke-width="1.5" stroke-linecap="round"/><path d="M9.4 9.4 H20.4 V20.4 H9.4 Z" fill="#1e1f22"/><path d="M10.6 10.6 H18.8 L15 14.7 L18.8 18.8 H10.6 Z" fill="#3b2466" stroke="#b98cf0" stroke-width="1.3" stroke-linejoin="round"/></svg>
<div class="t" style="left:471px;top:126.3px;font-size:17px;letter-spacing:0.05px;">PlayerMusicViewModel.kt</div>
<svg style="left:680.5px;top:120.5px" width="10" height="10"><path d="M0.8 0.8 L9.2 9.2 M9.2 0.8 L0.8 9.2" stroke="#868a91" stroke-width="1.3" stroke-linecap="round"/></svg>
<div class="abs" style="left:1266px;top:111px;width:30px;height:28px;border-radius:5px;background:#43454a"></div>
<svg style="left:1271px;top:115px" width="20" height="20"><g fill="none" stroke="#ced0d6" stroke-width="1.4" stroke-linecap="round" stroke-linejoin="round"><path d="M4 4.6 H16 M4 8.4 H16 M4 12.2 H16 M4 16 H16"/></g></svg>
<svg style="left:1305px;top:115px" width="22" height="20"><g fill="none" stroke="#ced0d6" stroke-width="1.4" stroke-linecap="round" stroke-linejoin="round"><path d="M2.4 4.6 H8 M2.4 8.4 H8 M2.4 12.2 H8 M2.4 16 H8"/><rect x="11.6" y="3.2" width="8" height="14" rx="2"/></g></svg>
<svg style="left:1341px;top:115px" width="20" height="20"><g fill="none" stroke="#ced0d6" stroke-width="1.4" stroke-linecap="round" stroke-linejoin="round"><rect x="2.8" y="3.2" width="14.4" height="14" rx="2"/><circle cx="12.8" cy="7.6" r="1.7"/><path d="M3.2 9.6 L14.4 17"/></g></svg>
<div class="abs" style="left:1373px;top:113px;width:1px;height:25px;background:#43454a"></div>
<svg style="left:1391px;top:116px" width="6" height="20"><circle cx="3" cy="3" r="1.4" fill="#ced0d6"/><circle cx="3" cy="9.4" r="1.4" fill="#ced0d6"/><circle cx="3" cy="15.8" r="1.4" fill="#ced0d6"/></svg>
<div class="abs" style="left:430px;top:318px;width:987px;height:674px;overflow:hidden"><div class="abs" style="left:-430px;top:-318px;width:1920px;height:1197px">
<div class="abs" style="left:430px;top:374px;width:987px;height:41.5px;background:#26282e"></div>
<div class="ig" style="left:560px;top:318px;height:674px;background:#313438"></div>
<div class="ig" style="left:618px;top:318px;height:222px"></div>
<div class="ig" style="left:678px;top:318px;height:180px"></div>
<div class="ig" style="left:738px;top:318px;height:139px"></div>
<div class="ig" style="left:798px;top:318px;height:98px"></div>
<div class="ig" style="left:858px;top:333px;height:41px"></div>
<div class="ig" style="left:618px;top:705px;height:287px"></div>
<div class="ig" style="left:678px;top:829px;height:81px"></div>
<div class="ln" style="top:292.1px;color:#4b5059">146</div>
<div class="cl" style="top:292.1px">                    <span style="color:#c77dbb;">_uiState</span>.<span style="color:#56a8f5;">update</span> <span style="background:#43454a;padding:6.2px 0 5.8px;">{</span> currentState -&gt;</div>
<div class="ln" style="top:334.4px;color:#4b5059">147</div>
<div class="cl" style="top:334.4px">                        currentState.copy(<span style="color:#56c1d6;">uiCurrentDuration</span></div>
<div class="ln" style="top:375.4px;color:#a1a3ab">148</div>
<div class="cl" style="top:375.4px">                    <span style="background:#43454a;padding:6.2px 0 5.8px;font-weight:bold;">}</span></div>
<div class="ln" style="top:416.7px;color:#4b5059">149</div>
<div class="cl" style="top:416.7px">                }</div>
<div class="ln" style="top:457.9px;color:#4b5059">150</div>
<div class="cl" style="top:457.9px">            }</div>
<div class="ln" style="top:499.2px;color:#4b5059">151</div>
<div class="cl" style="top:499.2px">        }</div>
<div class="ln" style="top:540.4px;color:#4b5059">152</div>
<div class="cl" style="top:540.4px">    }</div>
<div class="ln" style="top:581.7px;color:#4b5059">153</div>
<div class="cl" style="top:581.7px"></div>
<div class="ln" style="top:622.9px;color:#4b5059">154</div>
<div class="cl" style="top:622.9px">    <span style="color:#5f826b;font-style:italic;">/** </span><span style="color:#5f826b;font-style:italic;text-decoration:underline wavy #73955f 1px;text-underline-offset:2.6px;">Inicia</span><span style="color:#5f826b;font-style:italic;"> </span><span style="color:#5f826b;font-style:italic;text-decoration:underline wavy #73955f 1px;text-underline-offset:2.6px;">servicio</span><span style="color:#5f826b;font-style:italic;"> de </span><span style="color:#5f826b;font-style:italic;text-decoration:underline wavy #73955f 1px;text-underline-offset:2.6px;">notificación</span><span style="color:#5f826b;font-style:italic;"> de la </span><span style="color:#5f826b;font-style:italic;text-decoration:underline wavy #73955f 1px;text-underline-offset:2.6px;">reproducción</span></div>
<div class="ln" style="top:664.2px;color:#4b5059">155</div>
<div class="cl" style="top:664.2px">    <span style="color:#cf8e6d;">fun</span> <span style="color:#56a8f5;">startServiceMusicPlayer</span>(applicationContext: Context</div>
<div class="ln" style="top:705.4px;color:#4b5059">156</div>
<div class="cl" style="top:705.4px">        <span style="color:#cf8e6d;">val</span> index = <span style="color:#c77dbb;">uiState</span>.<span style="color:#c77dbb;">value</span>.<span style="color:#c77dbb;">uiCurrentMusicListIndex</span></div>
<div class="ln" style="top:746.7px;color:#4b5059">157</div>
<div class="cl" style="top:746.7px">        <span style="color:#cf8e6d;">val</span> list = <span style="color:#c77dbb;">uiState</span>.<span style="color:#c77dbb;">value</span>.<span style="color:#c77dbb;">uiMusicList</span>[index]</div>
<div class="ln" style="top:787.9px;color:#4b5059">158</div>
<div class="cl" style="top:787.9px">        <span style="color:#cf8e6d;">val</span> intent = Intent(applicationContext, MusicService</div>
<div class="ln" style="top:829.2px;color:#4b5059">159</div>
<div class="cl" style="top:829.2px">            putExtra(<span class="hint"><span class="hb">name:</span></span><span style="color:#6aab73;">&quot;musicName&quot;</span>, list.<span style="color:#c77dbb;">musicName</span>)</div>
<div class="ln" style="top:870.4px;color:#4b5059">160</div>
<div class="cl" style="top:870.4px">            putExtra(<span class="hint"><span class="hb">name:</span></span><span style="color:#6aab73;">&quot;artistName&quot;</span>, list.<span style="color:#c77dbb;">artistName</span>)</div>
<div class="ln" style="top:911.7px;color:#4b5059">161</div>
<div class="cl" style="top:911.7px">        }</div>
<div class="ln" style="top:952.9px;color:#4b5059">162</div>
<div class="cl" style="top:952.9px">        ContextCompat.startForegroundService(applicationContext</div>
<div class="abs" style="left:1406px;top:845px;width:10.5px;height:105px;background:#3f4145"></div>
<div class="abs" style="left:564px;top:980px;width:552px;height:8.5px;background:rgba(90,93,99,.55)"></div>
</div></div>
<div class="abs" style="left:430px;top:151px;width:987px;height:166.5px;background:#1e1f22;overflow:hidden"><div class="abs" style="left:-430px;top:-151px;width:1920px;height:1197px">
<div class="ln" style="top:153.4px;color:#4b5059">23</div>
<div class="cl" style="top:153.4px"><span style="color:#cf8e6d;">class</span> PlayerMusicViewModel: ViewModel(){</div>
<div class="ln" style="top:194.6px;color:#4b5059">141</div>
<div class="cl" style="top:194.6px">    <span style="color:#cf8e6d;">fun</span> <span style="color:#56a8f5;">setUiAutoDurationValue</span>(){</div>
<div class="ln" style="top:235.7px;color:#4b5059">142</div>
<div class="cl" style="top:235.7px">        <span style="color:#c77dbb;font-style:italic;">viewModelScope</span>.<span style="color:#56a8f5;font-style:italic;">launch</span>(Dispatchers.<span style="color:#c77dbb;">IO</span>) <span style="font-weight:bold;">{</span></div>
<div class="ln" style="top:276.4px;color:#4b5059">145</div>
<div class="cl" style="top:276.4px">                withContext(Dispatchers.<span style="color:#c77dbb;">Main</span>) <span style="font-weight:bold;">{</span></div>
</div></div>
<div class="abs" style="left:430px;top:316.5px;width:987px;height:1.6px;background:#4a4c50"></div>
<div class="abs" style="left:1170px;top:153px;width:247px;height:34px;background:#1e1f22"></div>
<svg style="left:1181px;top:163px" width="16" height="14"><path d="M1.8 7.2 L5.8 11 L13.8 2.6" fill="none" stroke="#5c9f62" stroke-width="2.3" stroke-linecap="round" stroke-linejoin="round"/></svg>
<div class="t" style="left:1201px;top:168.7px;font-size:16.5px;letter-spacing:0.8px;color:#ced0d6;">Up-to-date</div>
<div class="abs" style="left:1300px;top:158px;width:1px;height:23px;background:#393b40"></div>
<svg style="left:1314px;top:161px" width="18" height="18"><path d="M2.4 6.8 L6.2 10.4 L14.6 2" fill="none" stroke="#5c9f62" stroke-width="2.2" stroke-linecap="round" stroke-linejoin="round"/><path d="M1.6 15.4 L3.8 13.4 L6 15.4 L8.2 13.4 L10.4 15.4 L12.6 13.4 L14.6 15.2" fill="none" stroke="#5c9f62" stroke-width="1.2" stroke-linecap="round" stroke-linejoin="round"/></svg>
<div class="t" style="left:1335px;top:168.7px;font-size:16.5px;letter-spacing:-0.43px;color:#ced0d6;">67</div>
<svg style="left:1368px;top:166px" width="11" height="7"><path d="M0.8 5.6 L5.5 1 L10.2 5.6" fill="none" stroke="#ced0d6" stroke-width="1.3" stroke-linecap="round" stroke-linejoin="round"/></svg>
<svg style="left:1395.5px;top:166.5px" width="11" height="7"><path d="M0.8 1 L5.5 5.6 L10.2 1" fill="none" stroke="#ced0d6" stroke-width="1.3" stroke-linecap="round" stroke-linejoin="round"/></svg>
<!-- rdev -->
<div class="t" style="left:1434px;top:126.3px;font-size:16.8px;letter-spacing:0.98px;-webkit-text-stroke:0.55px #dfe1e5;">Running Devices</div>
<svg style="left:1603px;top:115px" width="18" height="18"><g fill="none" stroke="#ced0d6" stroke-width="1.4" stroke-linecap="round" stroke-linejoin="round"><path d="M9 1.4 V16.6 M1.4 9 H16.6"/></g></svg>
<svg style="left:1768px;top:116px" width="18" height="18"><rect x="2.2" y="2.2" width="13.6" height="13.6" rx="1" fill="none" stroke="#ced0d6" stroke-width="1.4"/><rect x="2.2" y="2.2" width="13.6" height="4.4" fill="#ced0d6"/></svg>
<svg style="left:1806.5px;top:116px" width="6" height="20"><circle cx="3" cy="3" r="1.4" fill="#ced0d6"/><circle cx="3" cy="9.4" r="1.4" fill="#ced0d6"/><circle cx="3" cy="15.8" r="1.4" fill="#ced0d6"/></svg>
<div class="abs" style="left:1835px;top:124.5px;width:16px;height:1.6px;background:#ced0d6;border-radius:1px"></div>
<div class="abs" style="left:1453px;top:152px;width:384px;height:828px;background:#121416"></div>
<div class="abs" style="left:1453px;top:152px;width:384px;height:35px;background:#7f7f7f"></div>
<div class="t" style="left:1510px;top:174.4px;font-size:13.2px;letter-spacing:0.2px;color:#f4f4f4;">00:10</div>
<svg style="left:1549.4px;top:168px" width="13.2" height="13.2" viewBox="0 0 14 14"><circle cx="7" cy="7" r="6.8" fill="#c3e4ee"/><path d="M7.6 2.6 Q5.2 4.6 6.6 6.6 Q8.8 8.4 7 10.2 Q5.6 11.2 5.2 9.6 M7.4 2.8 V11" fill="none" stroke="#5aa3cf" stroke-width="1.1" stroke-linecap="round"/></svg>
<svg style="left:1776px;top:167.5px" width="42" height="14"><g fill="#fff"><circle cx="5.6" cy="7.4" r="4.6"/><path d="M1 2.8 L3 0.8 L4 1.8 L2 3.8Z M10.2 2.8 L8.2 0.8 L7.2 1.8 L9.2 3.8Z M2.2 12.6 L3.4 10.8 L4.4 11.6 L3.2 13.2Z M9 12.6 L7.8 10.8 L6.8 11.6 L8 13.2Z"/></g><path d="M5.6 4.8 V7.6 L7.4 8.6" stroke="#7f7f7f" stroke-width="1" fill="none"/><g fill="#fff"><rect x="17.2" y="10.4" width="1.6" height="2.4"/><rect x="20.2" y="8.2" width="1.6" height="4.6" opacity=".9"/><rect x="23.2" y="5.4" width="1.6" height="7.4" opacity=".55"/><rect x="26.2" y="2.4" width="1.2" height="10.4" opacity=".45"/></g><path d="M32.6 3.2 H34.4 V1.8 H38 V3.2 H39.8 V13 H32.6 Z" fill="#fff"/><path d="M36.8 4.8 L34.6 8.4 H36.2 L35.6 11.4 L38 7.4 H36.4 Z" fill="#333"/></svg>
<svg style="left:1472px;top:203px" width="27" height="26"><path d="M24.8 13 H3 M13.4 2 L2.4 13 L13.4 24" fill="none" stroke="#e3e3e3" stroke-width="2.9" stroke-linejoin="miter"/></svg>
<div class="t" style="left:1517px;top:215.8px;font-size:20px;letter-spacing:0.11px;color:#e6e6e6;font-weight:700;height:26px;line-height:26px;margin-top:-13px;">Música actual</div>
<div class="abs" style="left:1504px;top:306px;width:282.3px;height:273.4px;background:#a5d1da"></div>
<svg style="left:1504px;top:306px" width="283" height="274"><ellipse cx="141.1" cy="136.4" rx="105.8" ry="102.5" fill="none" stroke="#000" stroke-width="23.4"/><ellipse cx="141.3" cy="136.6" rx="35.3" ry="34.4" fill="#000"/></svg>
<svg style="left:1516.5px;top:585.8px" width="56.8" height="55.4" viewBox="0 0 24 24" preserveAspectRatio="none"><path d="M3 10h11v2H3zm0-4h11v2H3zm0 8h7v2H3zm13-1v8l6-4z" fill="#e3e3e3"/></svg>
<svg style="left:1617px;top:586px" width="56.8" height="55.4" viewBox="0 0 24 24" preserveAspectRatio="none"><path d="M10.59 9.17L5.41 4 4 5.41l5.17 5.17 1.42-1.41zM14.5 4l2.04 2.04L4 18.59 5.41 20 17.96 7.46 20 9.5V4h-5.5zm.33 9.41l-1.41 1.41 3.13 3.13L14.5 20H20v-5.5l-2.04 2.04-3.13-3.13z" fill="#e3e3e3"/></svg>
<svg style="left:1718.3px;top:587.2px" width="55" height="53" viewBox="0 0 24 24" preserveAspectRatio="none"><path d="M7 7h10v3l4-4-4-4v3H5v6h2V7zm10 10H7v-3l-4 4 4 4v-3h12v-6h-2v4z" fill="#d3f3fb"/></svg>
<svg style="left:1472.5px;top:648px" width="34" height="34.2" viewBox="0 0 24 24" preserveAspectRatio="none"><path d="M12 14c1.66 0 2.99-1.34 2.99-3L15 5c0-1.66-1.34-3-3-3S9 3.34 9 5v6c0 1.66 1.34 3 3 3zm5.3-3c0 3-2.54 5.1-5.3 5.1S6.7 14 6.7 11H5c0 3.41 2.72 6.23 6 6.72V21h2v-3.28c3.28-.48 6-3.3 6-6.72h-1.7z" fill="#e3e3e3"/></svg>
<div class="t" style="left:1507.2px;top:664.5px;font-size:16.3px;letter-spacing:0.05px;color:#e3e3e3;">Bad Wolves</div>
<svg style="left:1471.5px;top:689px" width="36" height="34.3" viewBox="0 0 24 24" preserveAspectRatio="none"><path d="M12 3v10.55c-.59-.34-1.27-.55-2-.55-2.21 0-4 1.79-4 4s1.79 4 4 4 4-1.79 4-4V7h4V3h-6z" fill="#e3e3e3"/></svg>
<div class="t" style="left:1507.2px;top:705.6px;font-size:16.3px;letter-spacing:0.06px;color:#e3e3e3;">Legends Never Die</div>
<svg style="left:1474px;top:732px" width="32" height="31"><ellipse cx="15.4" cy="15.1" rx="13.3" ry="12.8" fill="none" stroke="#e3e3e3" stroke-width="2.8"/><ellipse cx="15.4" cy="15.1" rx="4.6" ry="4.4" fill="#e3e3e3"/></svg>
<div class="t" style="left:1507.2px;top:746.5px;font-size:16.3px;letter-spacing:0.05px;color:#e3e3e3;">Bad Wolves</div>
<div class="t" style="left:1472.8px;top:800.9px;font-size:16.2px;letter-spacing:-0.03px;color:#e3e3e3;font-weight:700;">0:18</div>
<div class="t" style="left:1785px;top:800.9px;font-size:16.2px;letter-spacing:-0.1px;color:#e3e3e3;font-weight:700;">2:57</div>
<svg style="left:1533.9px;top:775px" width="56.4" height="53.4" viewBox="0 0 24 24" preserveAspectRatio="none"><path d="M6 6h2v12H6zm3.5 6l8.5 6V6z" fill="#e3e3e3"/></svg>
<svg style="left:1617px;top:775.2px" width="56.2" height="52.9" viewBox="0 0 24 24" preserveAspectRatio="none"><path d="M8 5v14l11-7z" fill="#e3e3e3"/></svg>
<svg style="left:1699.9px;top:775px" width="56.4" height="53.4" viewBox="0 0 24 24" preserveAspectRatio="none"><path d="M6 18l8.5-6L6 6v12zM16 6v12h2V6h-2z" fill="#e3e3e3"/></svg>
<div class="abs" style="left:1473.8px;top:847.2px;width:27.6px;height:14.2px;border-radius:7.1px 2.5px 2.5px 7.1px;background:#d3f3fb"></div>
<div class="abs" style="left:1506.8px;top:834.7px;width:4.2px;height:39.7px;border-radius:2.1px;background:#d3f3fb"></div>
<div class="abs" style="left:1515.6px;top:847.2px;width:300.4px;height:14.2px;border-radius:2.5px 7.1px 7.1px 2.5px;background:#d3f3fb"></div>
<div class="abs" style="left:1515.6px;top:853.1px;width:293.4px;height:2.6px;border-radius:0 1.3px 1.3px 0;background:#121416"></div>
<div class="abs" style="left:1453px;top:936.6px;width:384px;height:43.2px;background:#000"></div>
<svg style="left:1528px;top:950px" width="240" height="18"><g fill="none" stroke="#dcdcdc" stroke-width="1.7" stroke-linecap="round" stroke-linejoin="round"><path d="M2.4 2.2 V15.6 M8.9 2.2 V15.6 M15.4 2.2 V15.6"/><rect x="108.8" y="1.8" width="14.6" height="14.2" rx="4.2"/><path d="M227.4 2 L219.8 8.9 L227.4 15.8"/></g></svg>
<!-- rstripe -->
<svg style="left:1882px;top:111px" width="28" height="30"><g fill="none" stroke="#ced0d6" stroke-width="1.8" stroke-linecap="round" stroke-linejoin="round"><path d="M3.6 21 Q6.4 18.6 6.4 14.6 V11.4 Q6.4 5.4 12.6 5 Q18.8 5.4 18.8 11.4 V14.6 Q18.8 18.6 21.6 21 Z"/><path d="M10.4 24.2 Q12.6 25.8 14.8 24.2"/></g><circle cx="20.4" cy="5.8" r="4.6" fill="#2b2d30"/><circle cx="20.4" cy="5.8" r="3.5" fill="#4a86f7"/></svg>
<svg style="left:1881px;top:163px" width="28" height="26"><g fill="none" stroke="#ced0d6" stroke-width="1.8" stroke-linecap="round" stroke-linejoin="round"><path d="M2.8 20.6 Q2 11.4 8.8 9.2 Q11 5.2 16 5.6 Q19.6 5.8 20.8 8.8 Q22 3.6 25 5 Q27 7 25 9.8 Q23.4 11.4 21.4 10.6"/><path d="M2.8 20.6 Q4.2 18.4 6 20.6 Q7.8 18.6 9.6 20.6 Q11.2 18.6 13 20.6 L14.2 17 Q18.2 18.4 21 15.4 Q22.6 13.2 21.6 10.8"/><circle cx="17.4" cy="10" r=".5" fill="#ced0d6"/></g></svg>
<svg style="left:1882px;top:212px" width="28" height="28"><g fill="none" stroke="#ced0d6" stroke-width="1.8" stroke-linecap="round" stroke-linejoin="round"><path d="M12.6 22.4 H6.6 Q4.6 22.4 4.6 20.4 V5.4 Q4.6 3.4 6.6 3.4 H14.6 Q16.6 3.4 16.6 5.4 V9.4"/><path d="M8.4 6.8 H11"/><path d="M11.8 23.4 Q12.4 16.6 18 16.6 Q23.6 16.6 24.2 23.4 Z"/><path d="M14.2 13.8 L15.6 16.8 M21.8 13.8 L20.4 16.8"/></g></svg>
<svg style="left:1884px;top:265px" width="22" height="22"><path d="M11 0.6 Q11.8 9.6 21.4 11 Q11.8 12.4 11 21.4 Q10.2 12.4 0.6 11 Q10.2 9.6 11 0.6 Z" fill="#dfe1e5"/></svg>
<div class="abs" style="left:1876.5px;top:307px;width:37.5px;height:37.5px;border-radius:7px;background:#43454a"></div>
<svg style="left:1882px;top:313px" width="28" height="28"><g fill="none" stroke="#ced0d6" stroke-width="1.8" stroke-linecap="round" stroke-linejoin="round"><path d="M9.4 22.4 H6.6 Q4.6 22.4 4.6 20.4 V5 Q4.6 3 6.6 3 H14.6 Q16.6 3 16.6 5 V9.6"/><path d="M8.4 6.4 H10.4"/><rect x="12.4" y="13.4" width="11.8" height="6.6" rx="1"/><path d="M11 23.4 H25.4"/></g></svg>
<!-- status -->
<div class="t" style="left:33px;top:1009.5px;font-size:17px;letter-spacing:-0.05px;color:#a3a6ad;">PlayerMusic</div>
<div class="t" style="left:170px;top:1009.5px;font-size:17px;letter-spacing:0.21px;color:#a3a6ad;">app</div>
<div class="t" style="left:230px;top:1009.5px;font-size:17px;letter-spacing:0.44px;color:#a3a6ad;">src</div>
<div class="t" style="left:300px;top:1009.5px;font-size:17px;letter-spacing:-0.09px;color:#a3a6ad;">main</div>
<div class="t" style="left:368px;top:1009.5px;font-size:17px;letter-spacing:-0.3px;color:#a3a6ad;">java</div>
<div class="t" style="left:429px;top:1009.5px;font-size:17px;letter-spacing:0.29px;color:#a3a6ad;">com</div>
<div class="t" style="left:493px;top:1009.5px;font-size:17px;letter-spacing:0.3px;color:#a3a6ad;">yjotdev</div>
<div class="t" style="left:580px;top:1009.5px;font-size:17px;letter-spacing:0.12px;color:#a3a6ad;">playermusic</div>
<div class="t" style="left:728px;top:1009.5px;font-size:17px;letter-spacing:0.23px;color:#a3a6ad;">data</div>
<svg style="left:18px;top:1004.5px" width="11" height="11"><rect x="1" y="1" width="9" height="9" rx="2.2" fill="#263f85" stroke="#5a8cf5" stroke-width="1.5"/></svg>
<svg style="left:155px;top:1004.5px" width="11" height="11"><rect x="1" y="1" width="9" height="9" rx="2.2" fill="#263f85" stroke="#5a8cf5" stroke-width="1.5"/></svg>
<svg style="left:284px;top:1004.5px" width="11" height="11"><rect x="1" y="1" width="9" height="9" rx="2.2" fill="#263f85" stroke="#5a8cf5" stroke-width="1.5"/></svg>
<svg style="left:136.5px;top:1004.8px" width="7" height="10"><path d="M1 0.8 L5.4 5 L1 9.2" fill="none" stroke="#a3a6ad" stroke-width="1.4" stroke-linecap="round" stroke-linejoin="round"/></svg>
<svg style="left:211.5px;top:1004.8px" width="7" height="10"><path d="M1 0.8 L5.4 5 L1 9.2" fill="none" stroke="#a3a6ad" stroke-width="1.4" stroke-linecap="round" stroke-linejoin="round"/></svg>
<svg style="left:266.5px;top:1004.8px" width="7" height="10"><path d="M1 0.8 L5.4 5 L1 9.2" fill="none" stroke="#a3a6ad" stroke-width="1.4" stroke-linecap="round" stroke-linejoin="round"/></svg>
<svg style="left:349.5px;top:1004.8px" width="7" height="10"><path d="M1 0.8 L5.4 5 L1 9.2" fill="none" stroke="#a3a6ad" stroke-width="1.4" stroke-linecap="round" stroke-linejoin="round"/></svg>
<svg style="left:410.5px;top:1004.8px" width="7" height="10"><path d="M1 0.8 L5.4 5 L1 9.2" fill="none" stroke="#a3a6ad" stroke-width="1.4" stroke-linecap="round" stroke-linejoin="round"/></svg>
<svg style="left:474px;top:1004.8px" width="7" height="10"><path d="M1 0.8 L5.4 5 L1 9.2" fill="none" stroke="#a3a6ad" stroke-width="1.4" stroke-linecap="round" stroke-linejoin="round"/></svg>
<svg style="left:561.5px;top:1004.8px" width="7" height="10"><path d="M1 0.8 L5.4 5 L1 9.2" fill="none" stroke="#a3a6ad" stroke-width="1.4" stroke-linecap="round" stroke-linejoin="round"/></svg>
<svg style="left:685px;top:1004.8px" width="7" height="10"><path d="M1 0.8 L5.4 5 L1 9.2" fill="none" stroke="#a3a6ad" stroke-width="1.4" stroke-linecap="round" stroke-linejoin="round"/></svg>
<svg style="left:704px;top:1001.0px" width="19" height="17"><path d="M1 3.6 Q1 1.6 3 1.6 H6.4 Q7.2 1.6 7.7 2.2 L9.2 4 H15.6 Q17.4 4 17.4 5.8 V13 Q17.4 14.8 15.6 14.8 H2.8 Q1 14.8 1 13 Z" fill="none" stroke="#a3a6ad" stroke-width="1.4" stroke-linejoin="round"/><circle cx="6.4" cy="9.6" r="1.9" fill="none" stroke="#a3a6ad" stroke-width="1.2"/></svg>
<div class="t" style="left:1505.3px;top:1009.5px;font-size:17px;letter-spacing:-0.17px;color:#a3a6ad;">148:22</div>
<div class="t" style="left:1578.2px;top:1009.5px;font-size:17px;letter-spacing:-1.1px;color:#a3a6ad;">CRLF</div>
<div class="t" style="left:1639.4px;top:1009.5px;font-size:17px;letter-spacing:-0.03px;color:#a3a6ad;">UTF-8</div>
<div class="t" style="left:1788.3px;top:1009.5px;font-size:17px;letter-spacing:0.08px;color:#a3a6ad;">4 spaces</div>
<svg style="left:1709px;top:1001px" width="18" height="18"><g fill="none" stroke="#ced0d6" stroke-width="1.4" stroke-linecap="round" stroke-linejoin="round"><path d="M2 2.4 H16 V12.6 H14.6 L16.4 15.6 L12 12.6 H2 Z"/><path d="M9 5 V8.4"/></g><circle cx="9" cy="10.6" r=".9" fill="#ced0d6"/></svg>
<svg style="left:1749.5px;top:1001.5px" width="16" height="16"><path d="M8 0.4 Q8.6 7 15.6 8 Q8.6 9 8 15.6 Q7.4 9 0.4 8 Q7.4 7 8 0.4 Z" fill="#dfe1e5"/></svg>
<svg style="left:1880px;top:1000px" width="20" height="20"><g fill="none" stroke="#ced0d6" stroke-width="1.4" stroke-linecap="round" stroke-linejoin="round"><rect x="3" y="8.6" width="12" height="9" rx="1.6"/><path d="M11.8 8.4 V5.6 Q11.8 2.6 14.8 2.6 Q17.4 2.6 17.6 5"/><path d="M9 12 V14.2"/></g></svg>
<div class="t" style="left:66.3px;top:1121.7px;font-size:80.5px;letter-spacing:-0.51px;color:#fff;height:100px;line-height:100px;margin-top:-50px;">App Reproductor de Música</div>
</body>
</html>
